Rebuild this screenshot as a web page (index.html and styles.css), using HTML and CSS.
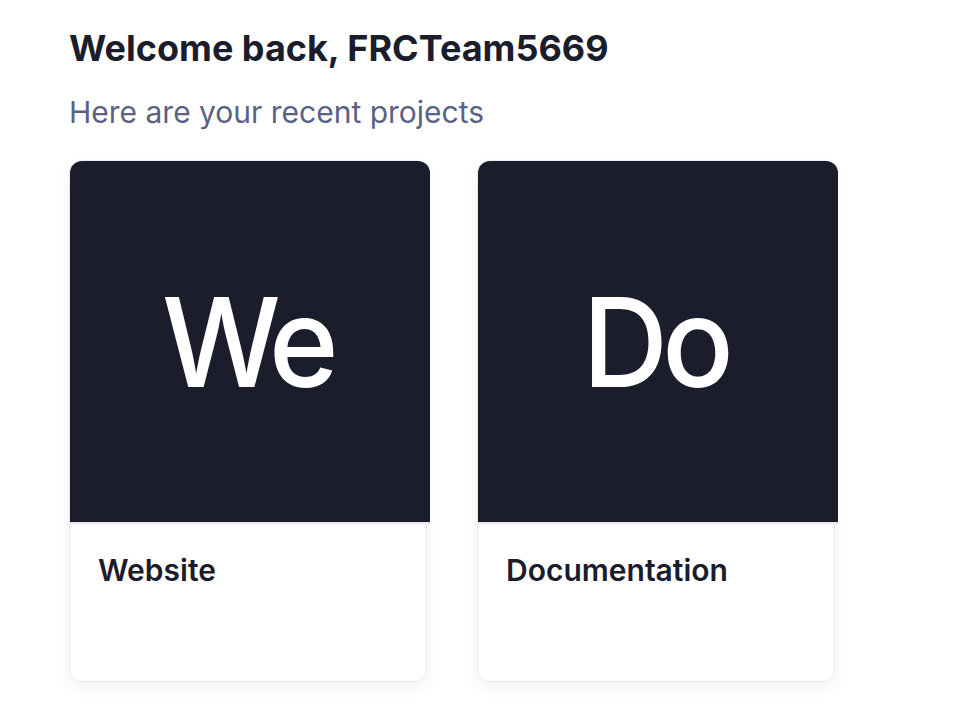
FILE: index.html
```html
<!DOCTYPE html>
<html lang="en">
<head>
<meta charset="utf-8">
<title>Recent projects</title>
<link rel="stylesheet" href="styles.css">
</head>
<body>
<main class="page">
  <h1 class="title">Welcome back, FRCTeam5669</h1>
  <p class="subtitle">Here are your recent projects</p>
  <div class="cards">
    <article class="card">
      <div class="thumb"><span>We</span></div>
      <div class="body"><h2 class="name">Website</h2></div>
    </article>
    <article class="card">
      <div class="thumb"><span>Do</span></div>
      <div class="body"><h2 class="name">Documentation</h2></div>
    </article>
  </div>
</main>
</body>
</html>
```

FILE: styles.css
```css
html, body {
  margin: 0;
  background: #ffffff;
}
body {
  font-family: Inter, "Noto Sans", sans-serif;
  color: #1b1d2c;
}
.page {
  padding: 28px 69px;
}
.title {
  margin: 0;
  font-size: 36px;
  line-height: 40px;
  font-weight: 700;
  color: #1b1d2c;
}
.subtitle {
  margin: 26px 0 0;
  font-size: 30px;
  line-height: 36px;
  font-weight: 400;
  color: #5a6284;
}
.cards {
  margin-top: 31px;
  display: flex;
  gap: 52px;
  padding-left: 1px;
}
.card {
  width: 356px;
  height: 520px;
  border-radius: 12px;
  background: #fff;
  box-shadow: 0 6px 18px rgba(30, 35, 60, 0.06), 0 0 0 1px rgba(236, 238, 245, 0.8);
  display: flex;
  flex-direction: column;
}
.thumb {
  width: 360px;
  height: 361px;
  flex: none;
  background: #1b1d2c;
  border-radius: 12px 12px 0 0;
  border-bottom: 2px solid #e6e8ef;
  display: flex;
  align-items: center;
  justify-content: center;
}
.thumb span {
  color: #fff;
  font-size: 124px;
  line-height: 1;
  font-weight: 500;
  letter-spacing: -6px;
  margin-right: 6px;
  transform: scaleX(0.955);
}
.body {
  padding: 28px 28px;
}
.name {
  margin: 0;
  font-size: 30px;
  line-height: 36px;
  font-weight: 600;
  color: #1b1d2c;
}
```
